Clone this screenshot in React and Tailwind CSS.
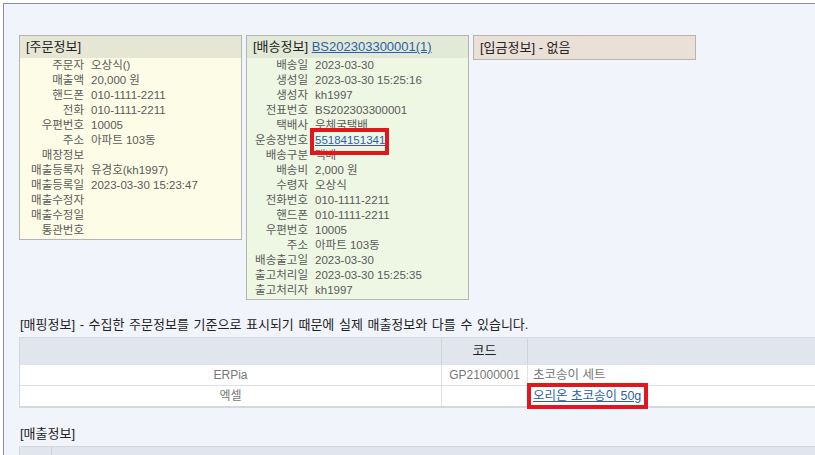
import React from "react";

const FONT = { fontFamily: "'Liberation Sans','Noto Sans CJK KR',sans-serif" };

const ORDER_ROWS = [
  ["주문자", "오상식()"],
  ["매출액", "20,000 원"],
  ["핸드폰", "010-1111-2211"],
  ["전화", "010-1111-2211"],
  ["우편번호", "10005"],
  ["주소", "아파트 103동"],
  ["매장정보", ""],
  ["매출등록자", "유경호(kh1997)"],
  ["매출등록일", "2023-03-30 15:23:47"],
  ["매출수정자", ""],
  ["매출수정일", ""],
  ["통관번호", ""],
];

const SHIP_ROWS = [
  ["배송일", "2023-03-30"],
  ["생성일", "2023-03-30 15:25:16"],
  ["생성자", "kh1997"],
  ["전표번호", "BS202303300001"],
  ["택배사", "우체국택배"],
  ["운송장번호", "__track"],
  ["배송구분", "택배"],
  ["배송비", "2,000 원"],
  ["수령자", "오상식"],
  ["전화번호", "010-1111-2211"],
  ["핸드폰", "010-1111-2211"],
  ["우편번호", "10005"],
  ["주소", "아파트 103동"],
  ["배송출고일", "2023-03-30"],
  ["출고처리일", "2023-03-30 15:25:35"],
  ["출고처리자", "kh1997"],
];

function RedBox({ className }) {
  return <span className={`absolute border-4 border-[#e3161e] pointer-events-none ${className}`} />;
}

function InfoRow({ label, value, labelW }) {
  return (
    <div className="flex h-[15px] items-center text-[11.5px] leading-[15px] text-[#5a5a5a]">
      <span className={`${labelW} shrink-0 text-right whitespace-nowrap`}>{label}</span>
      <span className="ml-[7px] whitespace-nowrap">
        {value === "__track" ? (
          <span className="relative inline-block leading-[15px]">
            <a className="text-[#2b5fae] underline">55184151341</a>
            <RedBox className="-left-[5px] -right-[4px] -top-[5px] -bottom-[7px]" />
          </span>
        ) : (
          value
        )}
      </span>
    </div>
  );
}

export default function App() {
  return (
    <div className="h-[455px] w-[815px] overflow-hidden bg-white pl-[3px] pt-[3px]" style={FONT}>
      <div className="h-[452px] w-[900px] border-l border-t border-[#8f8f8f] bg-[#f1f5fb] pl-[15px] pt-[31px]">
        {/* info boxes */}
        <div className="flex items-start gap-[4px]">
          <div className="w-[223px] border border-[#b5b5b5] bg-[#fdfde7]">
            <div className="h-[22px] bg-[#e6e6d5] pl-[6px] text-[13px] leading-[22px] text-[#222]">[주문정보]</div>
            <div className="pb-[1px]">
              {ORDER_ROWS.map(([l, v]) => (
                <InfoRow key={l} label={l} value={v} labelW="w-[64px]" />
              ))}
            </div>
          </div>

          <div className="w-[223px] border border-[#b5b5b5] bg-[#eef7e4]">
            <div className="h-[22px] bg-[#e2ead7] pl-[6px] text-[13px] leading-[22px] text-[#222] whitespace-nowrap">
              [배송정보] <a className="text-[#2b5fae] underline">BS202303300001(1)</a>
            </div>
            <div className="pb-[1px]">
              {SHIP_ROWS.map(([l, v]) => (
                <InfoRow key={l} label={l} value={v} labelW="w-[61px]" />
              ))}
            </div>
          </div>

          <div className="h-[25px] w-[223px] border border-[#b5b5b5] bg-[#ebe0d6] pl-[6px] text-[13px] leading-[23px] text-[#222]">
            [입금정보] - 없음
          </div>
        </div>

        {/* mapping */}
        <div className="mt-[17px] pl-[1px] text-[13px] leading-[15px] text-[#222] whitespace-nowrap [word-spacing:1px]">
          [매핑정보] - 수집한 주문정보를 기준으로 표시되기 때문에 실제 매출정보와 다를 수 있습니다.
        </div>
        <div className="mt-[5px] w-[870px] border-b-2 border-l border-t border-[#d3d8df] bg-white text-[12px]">
          <div className="flex h-[26px] bg-[#e1e6ee] text-[#222]">
            <div className="w-[422px] border-r border-[#cfd4db]" />
            <div className="w-[86px] border-r border-[#cfd4db] text-center text-[13px] leading-[26px]">코드</div>
            <div className="flex-1" />
          </div>
          <div className="flex h-[21px] border-t border-[#dde2e8] leading-[20px] text-[#777]">
            <div className="w-[422px] border-r border-[#dde2e8] text-center">ERPia</div>
            <div className="w-[86px] border-r border-[#dde2e8] text-center">GP21000001</div>
            <div className="flex-1 pl-[5px] text-[12.5px]">초코송이 세트</div>
          </div>
          <div className="flex h-[21px] border-t border-[#dde2e8] leading-[20px] text-[#777]">
            <div className="w-[422px] border-r border-[#dde2e8] text-center">엑셀</div>
            <div className="w-[86px] border-r border-[#dde2e8]" />
            <div className="flex-1 pl-[5px] text-[12.5px]">
              <span className="relative inline-block leading-[20px]">
                <a className="text-[#2b5fae] underline">오리온 초코송이 50g</a>
                <RedBox className="-left-[6px] -right-[7px] -top-[3px] -bottom-[3px]" />
              </span>
            </div>
          </div>
        </div>

        {/* sales */}
        <div className="mt-[18px] pl-[1px] text-[13px] leading-[15px] text-[#222]">[매출정보]</div>
        <div className="mt-[5px] flex h-[30px] w-[870px] border-l border-t border-[#d3d8df] bg-[#e1e6ee] text-[12px] text-[#222]">
          <div className="w-[32px] border-r border-[#cfd4db] pt-[6px] text-center">상태</div>
          <div className="flex-1" />
        </div>
      </div>
    </div>
  );
}
